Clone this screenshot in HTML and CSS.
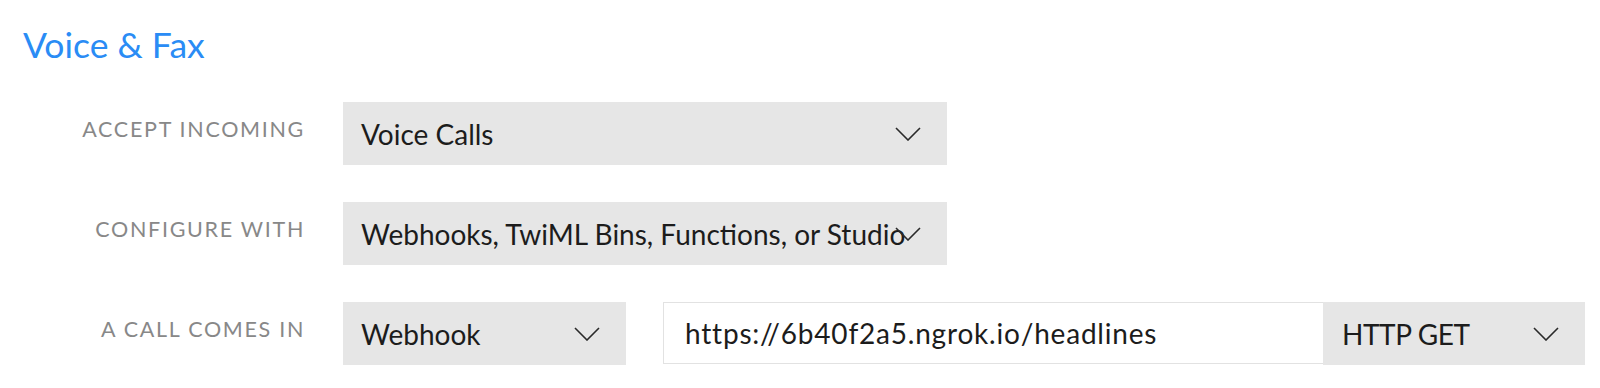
FILE: index.html
```html
<!DOCTYPE html>
<html>
<head>
  <meta charset="UTF-8">
  <title>Voice &amp; Fax</title>
  <link rel="stylesheet" href="styles.css">
</head>
<body>
  <div class="section">
    <h2 class="section-title">Voice &amp; Fax</h2>

    <div class="form-rows">
      <div class="form-row">
        <div class="field-label">Accept Incoming</div>
        <div class="select select-wide">
          <span class="select-value">Voice Calls</span>
          <svg class="chevron" viewBox="0 0 26 14"><polyline points="1,1 13,13 25,1"/></svg>
        </div>
      </div>

      <div class="form-row">
        <div class="field-label">Configure With</div>
        <div class="select select-wide">
          <span class="select-value">Webhooks, TwiML Bins, Functions, or Studio</span>
          <svg class="chevron" viewBox="0 0 26 14"><polyline points="1,1 13,13 25,1"/></svg>
        </div>
      </div>

      <div class="form-row">
        <div class="field-label">A Call Comes In</div>
        <div class="field-group">
          <div class="select select-small">
            <span class="select-value">Webhook</span>
            <svg class="chevron" viewBox="0 0 26 14"><polyline points="1,1 13,13 25,1"/></svg>
          </div>
          <div class="url-group">
            <div class="url-input">https://6b40f2a5.ngrok.io/headlines</div>
            <div class="select select-method">
              <span class="select-value">HTTP GET</span>
              <svg class="chevron" viewBox="0 0 26 14"><polyline points="1,1 13,13 25,1"/></svg>
            </div>
          </div>
        </div>
      </div>
    </div>
  </div>
</body>
</html>
```

FILE: styles.css
```css
* {
  margin: 0;
  padding: 0;
  box-sizing: border-box;
}

body {
  font-family: Lato, "Open Sans", sans-serif;
  color: #1c1c1c;
  background: #fff;
}

.section {
  padding: 23px 0 0 0;
}

.section-title {
  padding-left: 23px;
  font-size: 35.5px;
  line-height: 44px;
  font-weight: 400;
  color: #2a8cf5;
}

.form-rows {
  margin-top: 35px;
  display: flex;
  flex-direction: column;
  gap: 37px;
}

.form-row {
  display: grid;
  grid-template-columns: 305px auto;
  column-gap: 38px;
  align-items: start;
}

.field-label {
  padding-top: 15px;
  font-size: 21.5px;
  line-height: 24px;
  letter-spacing: 1.7px;
  text-transform: uppercase;
  text-align: right;
  color: #888;
}

.select {
  position: relative;
  height: 63px;
  padding: 0 18px;
  display: flex;
  align-items: center;
  background-color: #e6e6e6;
  font-size: 28px;
  white-space: nowrap;
}

.select-wide {
  width: 604px;
}

.select-small {
  width: 283px;
}

.select-method {
  width: 262px;
  padding-left: 19px;
  letter-spacing: -0.4px;
}

.chevron {
  position: absolute;
  right: 26px;
  top: 25px;
  width: 26px;
  height: 14px;
  fill: none;
  stroke: #2a2a2a;
  stroke-width: 1.6;
}

.field-group {
  display: flex;
  gap: 37px;
}

.url-group {
  display: flex;
}

.url-input {
  width: 660px;
  height: 62px;
  padding: 0 21px;
  display: flex;
  align-items: center;
  border: 1px solid #e2e2e2;
  border-right: none;
  font-size: 28px;
  letter-spacing: 0.8px;
  white-space: nowrap;
}
```
